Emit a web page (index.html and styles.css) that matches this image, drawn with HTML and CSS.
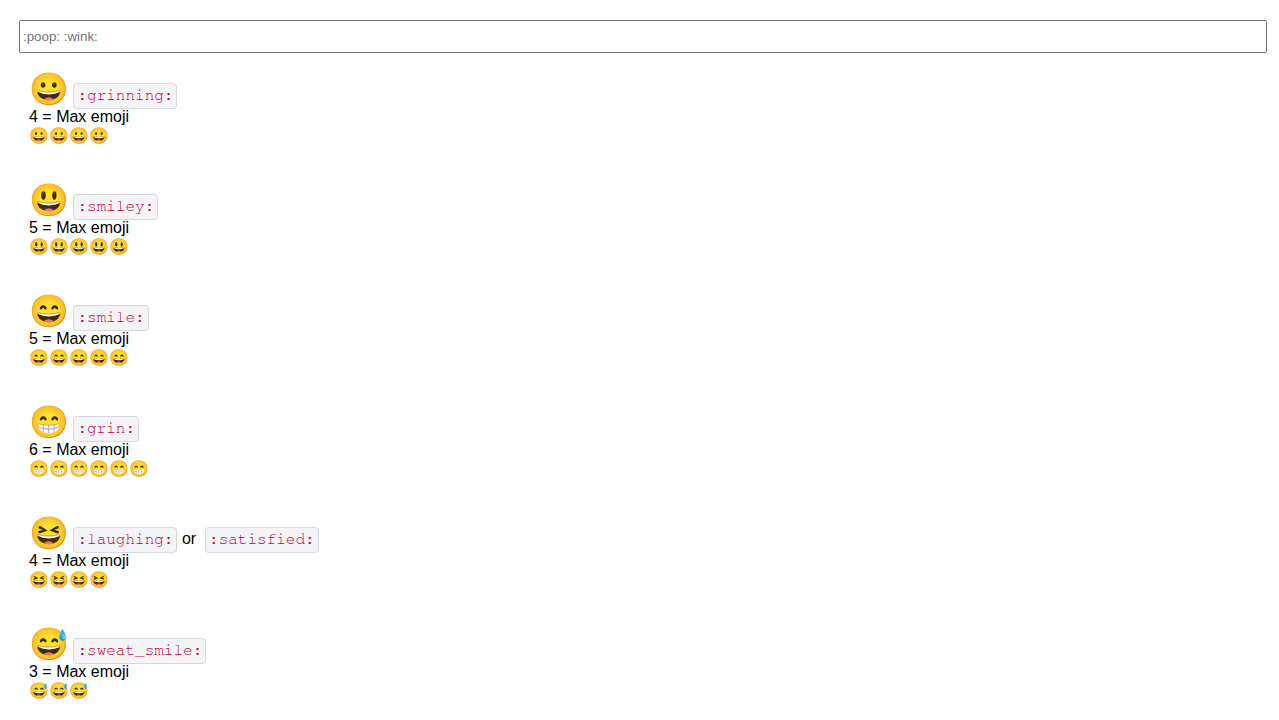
FILE: index.html
```html
<!DOCTYPE html>
<html lang="en">
<head>
<meta charset="utf-8">
<title>Emoji</title>
<link rel="stylesheet" href="styles.css">
</head>
<body>
<input class="search" type="text" aria-label="Emoji codes" placeholder=":poop: :wink:">
<main class="list">
<section class="entry">
  <div class="head"><span class="big">😀</span> <code class="code">:grinning:</code></div>
  <div>4 = Max emoji</div>
  <div>😀😀😀😀</div>
</section>
<section class="entry">
  <div class="head"><span class="big">😃</span> <code class="code">:smiley:</code></div>
  <div>5 = Max emoji</div>
  <div>😃😃😃😃😃</div>
</section>
<section class="entry">
  <div class="head"><span class="big">😄</span> <code class="code">:smile:</code></div>
  <div>5 = Max emoji</div>
  <div>😄😄😄😄😄</div>
</section>
<section class="entry">
  <div class="head"><span class="big">😁</span> <code class="code">:grin:</code></div>
  <div>6 = Max emoji</div>
  <div>😁😁😁😁😁😁</div>
</section>
<section class="entry">
  <div class="head"><span class="big">😆</span> <code class="code">:laughing:</code> or&nbsp; <code class="code">:satisfied:</code></div>
  <div>4 = Max emoji</div>
  <div>😆😆😆😆</div>
</section>
<section class="entry">
  <div class="head"><span class="big">😅</span> <code class="code">:sweat_smile:</code></div>
  <div>3 = Max emoji</div>
  <div>😅😅😅</div>
</section>
</main>
</body>
</html>
```

FILE: styles.css
```css
body {
  margin: 20px 12px 0 19px;
  font: 16px/19px "Liberation Sans", Arial, sans-serif;
  color: #000;
  background: #fff;
}
.search {
  display: block;
  width: 100%;
  height: 33px;
  box-sizing: border-box;
}
.list {
  display: grid;
  gap: 43px;
  padding: 24px 10px 0;
}
.head {
  line-height: 24px;
}
.big {
  font-size: 32px;
}
.code {
  padding: 3px 3px 5px;
  border: 1px solid #d8d8e2;
  border-radius: 4px;
  background: #f4f4f6;
  color: #c00040;
  font-family: FreeMono, "Liberation Mono", monospace;
  font-size: 16px;
}
```
